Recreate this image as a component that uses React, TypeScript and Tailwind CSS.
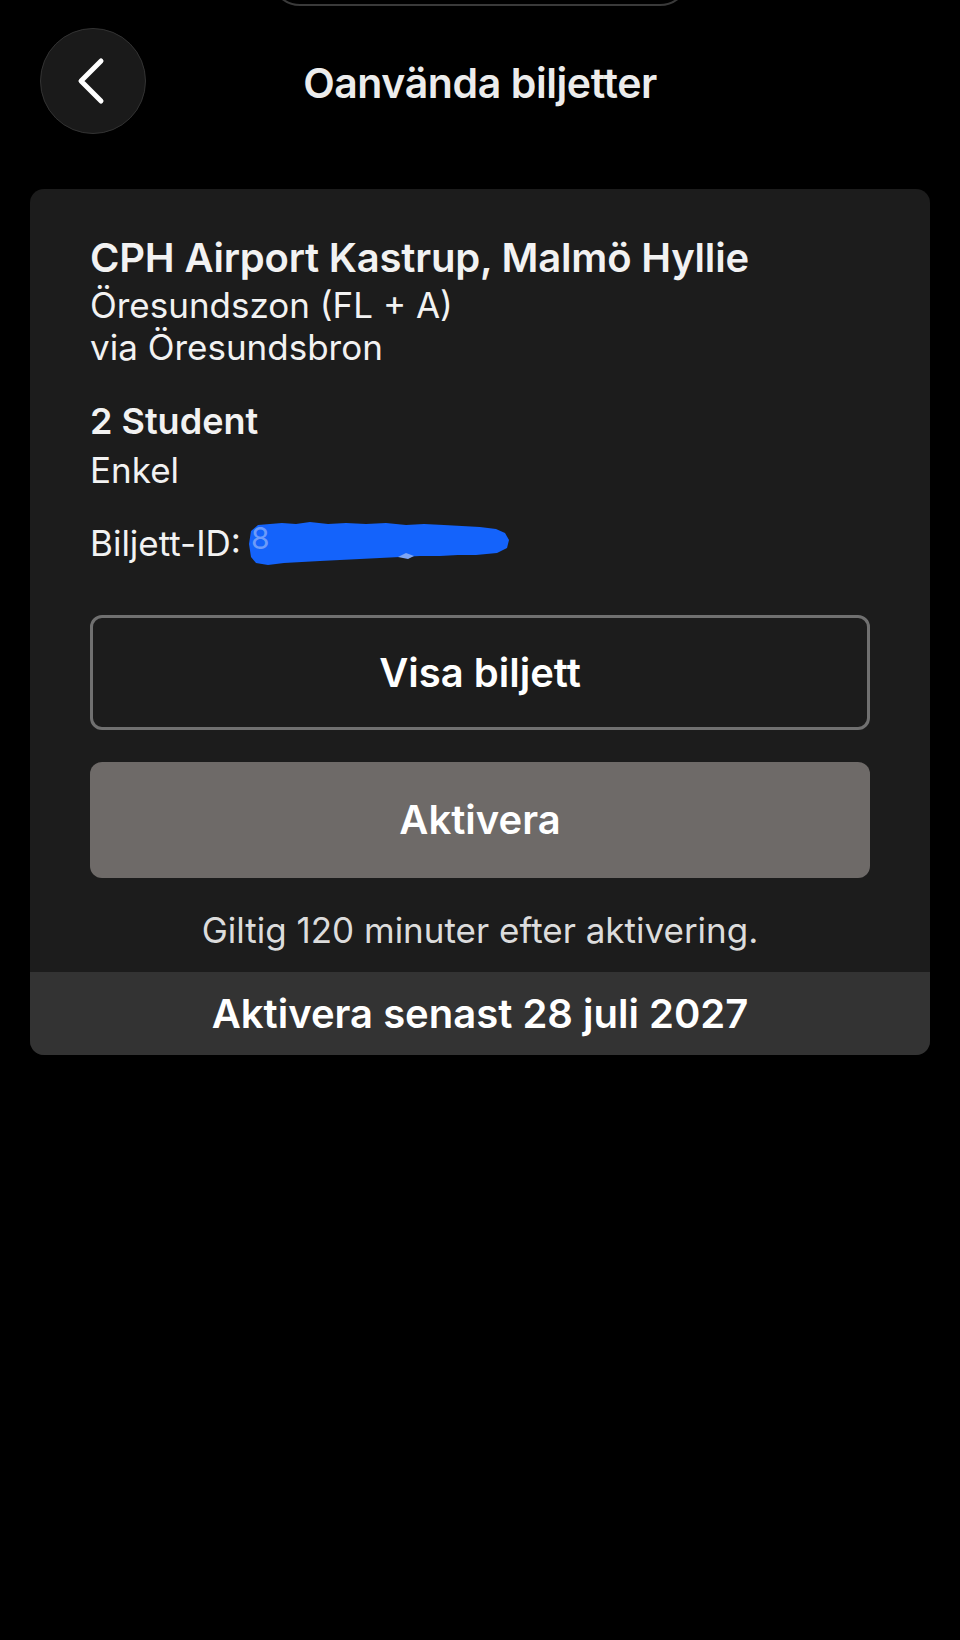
import { useState } from 'react';

const BackChevron = () => (
  <svg width="28" height="48" viewBox="0 0 28 48" fill="none">
    <path d="M24 4 L4 24 L24 44" stroke="#ffffff" strokeWidth="5" strokeLinecap="round" strokeLinejoin="round" />
  </svg>
);

// the blue scribble hiding the ticket number
const Scribble = () => (
  <svg width="262" height="46" viewBox="0 0 262 46" className="ml-[7px] shrink-0">
    <path
      d="M3 11 L10 5 L22 4 L34 3 L48 4 L62 2 L80 4 L98 3 L118 4 L138 3 L158 5 L176 4 L196 5 L214 6 L232 7 L248 9 L257 13 L261 20 L259 28 L249 33 L228 35 L210 35 L192 36 L172 36 L152 37 L132 38 L112 39 L92 40 L72 41 L54 42 L36 43 L20 45 L8 43 L3 37 L1 24 Z"
      fill="#1463fb"
    />
    <path d="M150 37 L158 33 L166 36 L160 39 Z" fill="#7fa6f5" />
    <text x="3" y="29" fontSize="30" fill="#c3d4f8" opacity="0.5" fontFamily="Inter, sans-serif">8</text>
  </svg>
);

const App = () => {
  const [active] = useState(false);

  return (
    <div className="min-h-[1640px] bg-black text-[#f2f2f2] font-[Inter,sans-serif]">
      <div className="h-[6px] overflow-hidden">
        <div className="w-[420px] h-[60px] -mt-[54px] mx-auto rounded-[30px] border-2 border-[#3a3a3a]" />
      </div>

      <header className="grid grid-cols-[1fr_auto_1fr] items-center px-[40px] pt-[22px]">
        <button className="w-[106px] h-[106px] rounded-full bg-[#1a1a1a] border border-[#333333] flex items-center justify-center pr-[4px]">
          <BackChevron />
        </button>
        <h1 className="mt-[3px] text-[41px] leading-[48px] font-semibold tracking-[-0.01em] text-[#ececec]">
          Oanvända biljetter
        </h1>
        <div />
      </header>

      <section className="mx-[30px] mt-[55px] rounded-[14px] bg-[#1c1c1c] overflow-hidden">
        <div className="px-[60px] pt-[46px] pb-[21px]">
          <div className="text-[40px] leading-[46px] font-semibold tracking-[-0.005em]">
            CPH Airport Kastrup, Malmö Hyllie
          </div>
          <div className="mt-[3px] text-[35px] leading-[42px]">Öresundszon (FL + A)</div>
          <div className="text-[35px] leading-[42px]">via Öresundsbron</div>

          <div className="mt-[32px] text-[36px] leading-[42px] font-semibold">2 Student</div>
          <div className="mt-[7px] text-[35px] leading-[42px]">Enkel</div>

          <div className="mt-[31px] h-[42px] flex items-center text-[35px] leading-[42px]">
            <span>Biljett-ID:</span>
            <Scribble />
          </div>

          <button className="mt-[51px] w-full h-[115px] rounded-[12px] border-[3px] border-[#707070] bg-[#1c1c1c] text-[40px] font-semibold text-white">
            Visa biljett
          </button>
          <button
            className="mt-[32px] w-full h-[116px] rounded-[12px] bg-[#6e6a68] text-[40px] font-semibold text-white"
            disabled={!active}
          >
            Aktivera
          </button>

          <p className="mt-[31px] text-center text-[35px] leading-[42px] text-[#dcdcdc]">
            Giltig 120 minuter efter aktivering.
          </p>
        </div>
        <div className="h-[83px] bg-[#333333] flex items-center justify-center text-[40px] font-semibold text-white">
          Aktivera senast 28 juli 2027
        </div>
      </section>
    </div>
  );
};

export default App;
